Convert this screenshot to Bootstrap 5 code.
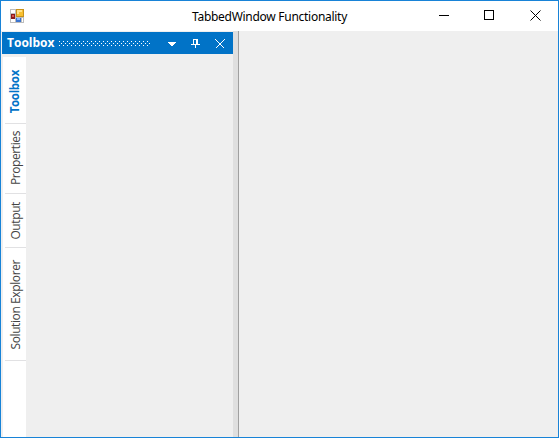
<!DOCTYPE html>
<html lang="en">
<head>
<meta charset="utf-8">
<meta name="viewport" content="width=device-width, initial-scale=1">
<title>TabbedWindow Functionality</title>
<link href="https://cdn.jsdelivr.net/npm/bootstrap@5.3.0/dist/css/bootstrap.min.css" rel="stylesheet">
<style>
body { font-family: "Open Sans", "Noto Sans", sans-serif; font-size: 12px; line-height: 1; color: #000; }
svg { display: block; }
.app-window { width: 559px; height: 438px; border: 1px solid #1883d7; background: #efefef; }
.title-bar { height: 30px; }
.title-side { width: 117px; padding-left: 9px; }
.title-text { font-family: "Noto Sans", sans-serif; letter-spacing: -.28px; white-space: nowrap; padding-top: 1px; }
.dock-pane { width: 232px; padding: 1px 0 0 1px; }
.pane-header { height: 22px; background: #0173c7; color: #fff; padding-left: 5px; }
.pane-name { width: 51px; font-weight: 700; font-size: 12px; white-space: nowrap; }
.tab-strip { width: 23px; margin: 3px 0 0 1px; background: #fff; }
.side-tab { color: #444; padding-left: 2px; }
.side-tab > div { border-bottom: 1px solid #e1e1e3; width: 21px; }
.side-tab span { writing-mode: vertical-rl; transform: rotate(180deg); white-space: nowrap; font-size: 12px; letter-spacing: -.4px; }
.t3 span, .t4 span { padding-bottom: 1px; }
.side-tab.current { color: #0173c7; font-weight: 700; }
.t1 > div { height: 67px; } .t2 > div { height: 70px; } .t3 > div { height: 54px; } .t4 > div { height: 113px; }
.side-tab.t1 span { font-size: 11.5px; letter-spacing: -.3px; padding-bottom: 4px; margin-right: 2px; }
.splitter { width: 5px; background: #dfdfdf; }
.content-area { border-left: 1px solid #a0a0a0; }
</style>
<script src="https://cdn.jsdelivr.net/npm/bootstrap@5.3.0/dist/js/bootstrap.bundle.min.js"></script>
</head>
<body class="m-0 overflow-hidden">
<div class="app-window d-flex flex-column">
  <header class="title-bar bg-white d-flex align-items-center">
    <div class="title-side">
      <svg width="16" height="16" viewBox="0 0 16 16" shape-rendering="crispEdges"><path fill="#bdbdbd" d="M0 1h14v14H0z"/><path fill="#fff" d="M1 2h4v3H1zM1 11h4v3H1zM12 10h1v4h-1z"/><path fill="#c8921a" d="M6 1h8v8H6z"/><path fill="#f8c030" d="M7 2h6v6H7z"/><path fill="#ffe28a" d="M7 2h5v2H9v2H7z"/><path fill="#8b1a1a" d="M1 6h4v5H1z"/><path fill="#d9534f" d="M2 7h2v2H2z"/><path fill="#3a74d0" d="M6 10h5v4H6z"/><path fill="#8ab8ff" d="M7 10h3v2H7z"/></svg>
    </div>
    <div class="title-text flex-grow-1 text-center">TabbedWindow Functionality</div>
    <svg width="137" height="30"><g shape-rendering="crispEdges"><path d="M18 14h10v1H18z"/><path fill="none" stroke="#000" d="M63.500 9.500h9v9h-9z"/></g><path d="M109.500 9.500l10 10M119.500 9.500l-10 10" stroke="#000"/></svg>
  </header>
  <main class="d-flex flex-grow-1">
    <section class="dock-pane d-flex flex-column">
      <div class="pane-header d-flex align-items-center">
        <span class="pane-name">Toolbox</span>
        <svg width="175" height="22" shape-rendering="crispEdges">
          <defs><pattern id="grip" x="1" y="9" width="4" height="4" patternUnits="userSpaceOnUse"><path fill="#fff" d="M0 0h1v1H0zM2 2h1v1H2z"/></pattern></defs>
          <path fill="url(#grip)" d="M1 9h92v5H1z"/>
          <path fill="#fff" d="M110 10h8v1h-1v1h-1v1h-1v1h-2v-1h-1v-1h-1v-1h-1z"/>
          <path fill="#fff" d="M135 7h5v5h2v1h-4v3h-1v-3h-4v-1h2zM136 8v4h2V8z" fill-rule="evenodd"/>
          <path d="M157.500 7.500l9 9M166.500 7.500l-9 9" stroke="#fff" fill="none"/>
        </svg>
      </div>
      <nav class="tab-strip flex-grow-1" aria-label="Tool windows">
        <div class="side-tab current t1"><div class="d-flex align-items-center justify-content-center"><span>Toolbox</span></div></div>
        <div class="side-tab t2"><div class="d-flex align-items-center justify-content-center"><span>Properties</span></div></div>
        <div class="side-tab t3"><div class="d-flex align-items-center justify-content-center"><span>Output</span></div></div>
        <div class="side-tab t4"><div class="d-flex align-items-center justify-content-center"><span>Solution Explorer</span></div></div>
      </nav>
    </section>
    <div class="splitter"></div>
    <section class="content-area flex-grow-1"></section>
  </main>
</div>
</body>
</html>
